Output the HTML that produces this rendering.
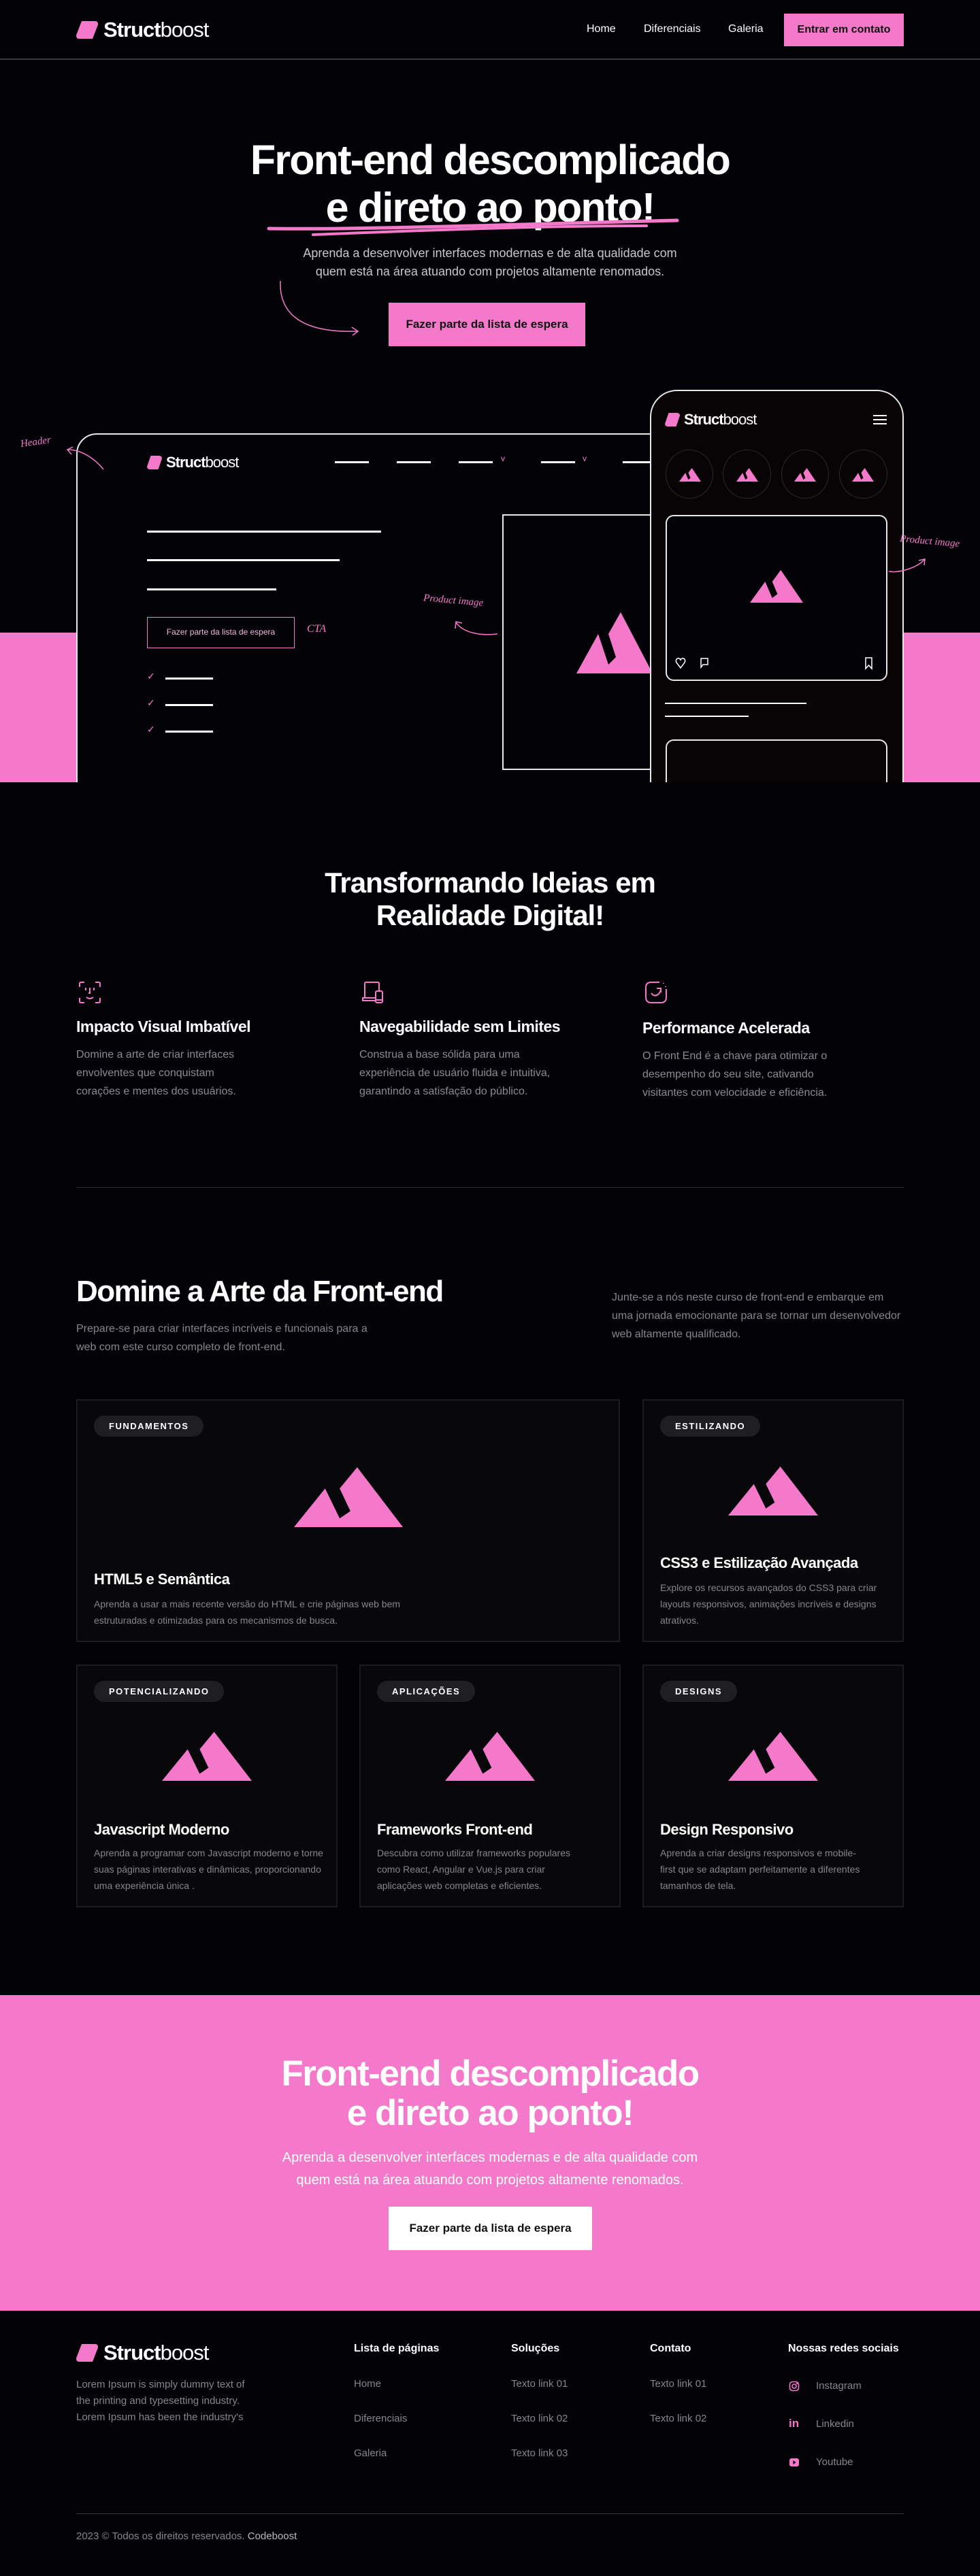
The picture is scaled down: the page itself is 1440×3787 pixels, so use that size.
<!DOCTYPE html>
<html><head><meta charset="utf-8"><style>
*{margin:0;padding:0;box-sizing:border-box}
body{width:1440px;height:3787px;background:#030307;color:#fff;font-family:"Liberation Sans",sans-serif;position:relative;overflow:hidden}
.a{position:absolute}
.pk{color:#f479ca}
.logo{display:flex;align-items:center;font-size:31px;letter-spacing:-1px;color:#fff}
.logo b{font-weight:700}.logo span{font-weight:400}
.logo i{display:inline-block;width:32px;height:26px;background:#f479ca;margin-right:8px;clip-path:polygon(25% 0,100% 0,100% 20%,75% 100%,0 100%,0 80%);border-radius:4px}
.ln{position:absolute;height:3px;background:#fff}
.card{position:absolute;background:#08080b;border:2px solid #1c1c20}
.pill{position:absolute;left:24px;top:22px;height:31px;padding:0 22px;border-radius:16px;background:#1f1f23;font-size:13px;letter-spacing:1.5px;line-height:31px;font-weight:700;color:#fff}
.ct{position:absolute;left:24px;font-size:22px;font-weight:700;letter-spacing:-.5px}
.cd{position:absolute;left:24px;font-size:14px;line-height:24px;color:#85858c}
.fh{position:absolute;font-size:16px;font-weight:700}
.fl{position:absolute;font-size:15px;color:#85858c}
.ft h3{font-size:23px;font-weight:700;letter-spacing:-.5px}
.ft p{font-size:16px;line-height:27px;color:#8a8a92;margin-top:14px;width:295px}
</style></head><body>
<svg width="0" height="0" style="position:absolute"><defs><g id="mt"><polygon fill="#f479ca" points="0,90 32,32 47,77 58,66 47,32 65,0 112,90"/></g></defs></svg>

<!-- NAV -->
<div class="a logo" style="left:112px;top:26px"><i></i><b>Struct</b><span>boost</span></div>
<div class="a" style="left:862px;top:34px;font-size:16px">Home</div>
<div class="a" style="left:946px;top:34px;font-size:16px">Diferenciais</div>
<div class="a" style="left:1070px;top:34px;font-size:16px">Galeria</div>
<div class="a" style="left:1152px;top:20px;width:176px;height:48px;background:#f479ca;color:#111;font-size:16px;font-weight:700;text-align:center;line-height:48px">Entrar em contato</div>
<div class="a" style="left:0;top:86px;width:1440px;height:2px;background:#3a3a3e"></div>

<!-- HERO -->
<div class="a" style="left:0;top:200px;width:1440px;text-align:center;font-size:61px;font-weight:700;letter-spacing:-1.8px;line-height:70px">Front-end descomplicado<br>e direto ao ponto!</div>
<svg class="a" style="left:390px;top:318px" width="610" height="40"><path d="M5 18 C150 20 350 12 605 6" stroke="#f479ca" stroke-width="5" fill="none" stroke-linecap="round"/><path d="M70 27 C250 20 400 14 560 14" stroke="#f479ca" stroke-width="4" fill="none" stroke-linecap="round"/></svg>
<div class="a" style="left:0;top:359px;width:1440px;text-align:center;font-size:18px;line-height:27px;color:#c8c8cc">Aprenda a desenvolver interfaces modernas e de alta qualidade com<br>quem está na área atuando com projetos altamente renomados.</div>
<svg class="a" style="left:405px;top:410px" width="130" height="85"><path d="M7 3 C5 45 30 80 120 77" stroke="#f479ca" stroke-width="1.5" fill="none"/><path d="M112 71 L121 77 L113 83" stroke="#f479ca" stroke-width="1.5" fill="none"/></svg>
<div class="a" style="left:571px;top:445px;width:289px;height:64px;background:#f479ca;color:#111;font-size:17px;font-weight:700;text-align:center;line-height:64px">Fazer parte da lista de espera</div>

<!-- pink bands -->
<div class="a" style="left:0;top:930px;width:1440px;height:220px;background:#f479ca"></div>

<!-- desktop mockup -->
<div class="a" style="left:112px;top:637px;width:900px;height:560px;border:2px solid #e8e8e8;border-radius:30px 0 0 0;background:#030307"></div>
<div class="a logo" style="left:216px;top:667px;font-size:22px"><i style="width:22px;height:20px;margin-right:6px"></i><b>Struct</b><span>boost</span></div>
<div class="ln" style="left:492px;top:678px;width:50px"></div>
<div class="ln" style="left:583px;top:678px;width:50px"></div>
<div class="ln" style="left:674px;top:678px;width:50px"></div><div class="a pk" style="left:736px;top:667px;font-size:12px">v</div>
<div class="ln" style="left:795px;top:678px;width:50px"></div><div class="a pk" style="left:856px;top:667px;font-size:12px">v</div>
<div class="ln" style="left:915px;top:678px;width:50px"></div>
<div class="ln" style="left:216px;top:780px;width:344px"></div>
<div class="ln" style="left:216px;top:822px;width:283px"></div>
<div class="ln" style="left:216px;top:865px;width:190px"></div>
<div class="a" style="left:216px;top:907px;width:217px;height:46px;border:1.5px solid #f479ca;font-size:12px;color:#f0b8dc;text-align:center;line-height:43px">Fazer parte da lista de espera</div>
<div class="a pk" style="left:451px;top:916px;font-size:16px;font-style:italic;font-family:'Liberation Serif',serif">CTA</div>
<div class="a pk" style="left:216px;top:986px;font-size:14px">✓</div><div class="ln" style="left:243px;top:996px;width:70px"></div>
<div class="a pk" style="left:216px;top:1025px;font-size:14px">✓</div><div class="ln" style="left:243px;top:1035px;width:70px"></div>
<div class="a pk" style="left:216px;top:1064px;font-size:14px">✓</div><div class="ln" style="left:243px;top:1074px;width:70px"></div>
<div class="a" style="left:738px;top:756px;width:260px;height:376px;border:2px solid #e8e8e8"></div>
<svg class="a" style="left:847px;top:900px" width="120" height="90"><use href="#mt"/></svg>
<div class="a pk" style="left:622px;top:875px;font-size:15px;font-style:italic;font-family:'Liberation Serif',serif;transform:rotate(5deg)">Product image</div>
<svg class="a" style="left:665px;top:910px" width="70" height="30"><path d="M5 5 C15 20 40 25 66 22" stroke="#f479ca" stroke-width="1.5" fill="none"/><path d="M4 14 L5 4 L14 6" stroke="#f479ca" stroke-width="1.5" fill="none"/></svg>
<div class="a pk" style="left:30px;top:642px;font-size:15px;font-style:italic;font-family:'Liberation Serif',serif;transform:rotate(-8deg)">Header</div>
<svg class="a" style="left:95px;top:655px" width="60" height="40"><path d="M5 6 C25 6 45 20 57 35" stroke="#f479ca" stroke-width="1.5" fill="none"/><path d="M12 2 L4 6 L10 13" stroke="#f479ca" stroke-width="1.5" fill="none"/></svg>

<!-- phone -->
<div class="a" style="left:955px;top:573px;width:373px;height:620px;border:2px solid #e8e8e8;border-radius:40px 40px 0 0;background:#080305"></div>
<div class="a logo" style="left:977px;top:604px;font-size:22px"><i style="width:22px;height:20px;margin-right:6px"></i><b>Struct</b><span>boost</span></div>
<div class="a" style="left:1283px;top:610px;width:20px;height:2px;background:#fff;box-shadow:0 6px 0 #fff,0 12px 0 #fff"></div>
<div class="a" style="left:978px;top:661px;width:70px;height:72px;border:1.5px solid #2a2a2e;border-radius:50%"></div>
<div class="a" style="left:1062px;top:661px;width:71px;height:72px;border:1.5px solid #2a2a2e;border-radius:50%"></div>
<div class="a" style="left:1148px;top:661px;width:70px;height:72px;border:1.5px solid #2a2a2e;border-radius:50%"></div>
<div class="a" style="left:1233px;top:661px;width:71px;height:72px;border:1.5px solid #2a2a2e;border-radius:50%"></div>
<svg class="a" style="left:998px;top:688px" width="32" height="20" viewBox="0 0 112 90" preserveAspectRatio="none"><use href="#mt"/></svg>
<svg class="a" style="left:1082px;top:688px" width="32" height="20" viewBox="0 0 112 90" preserveAspectRatio="none"><use href="#mt"/></svg>
<svg class="a" style="left:1167px;top:688px" width="32" height="20" viewBox="0 0 112 90" preserveAspectRatio="none"><use href="#mt"/></svg>
<svg class="a" style="left:1252px;top:688px" width="32" height="20" viewBox="0 0 112 90" preserveAspectRatio="none"><use href="#mt"/></svg>
<div class="a" style="left:978px;top:757px;width:326px;height:244px;border:2px solid #e8e8e8;border-radius:12px;background:#030307"></div>
<svg class="a" style="left:1102px;top:838px" width="78" height="48" viewBox="0 0 112 90" preserveAspectRatio="none"><use href="#mt"/></svg>
<svg class="a" style="left:992px;top:965px" width="60" height="20"><path d="M8 17 L2 9 C0 5 3 2 6 3 C7 3 8 5 8 6 C8 5 9 3 10 3 C13 2 16 5 14 9 Z" stroke="#fff" stroke-width="1.5" fill="none"/><path d="M38 3 H48 V12 H41 L38 16 Z" stroke="#fff" stroke-width="1.5" fill="none"/></svg>
<svg class="a" style="left:1270px;top:965px" width="14" height="20"><path d="M2 2 H11 V18 L6.5 13 L2 18 Z" stroke="#fff" stroke-width="1.5" fill="none"/></svg>
<div class="a" style="left:977px;top:1033px;width:208px;height:2px;background:#fff"></div>
<div class="a" style="left:977px;top:1052px;width:123px;height:2px;background:#fff"></div>
<div class="a" style="left:978px;top:1087px;width:326px;height:100px;border:2px solid #e8e8e8;border-radius:12px"></div>
<div class="a pk" style="left:1322px;top:788px;font-size:15px;font-style:italic;font-family:'Liberation Serif',serif;transform:rotate(5deg)">Product image</div>
<svg class="a" style="left:1304px;top:818px" width="60" height="30"><path d="M2 22 C20 25 45 15 54 5" stroke="#f479ca" stroke-width="1.5" fill="none"/><path d="M46 6 L55 4 L54 13" stroke="#f479ca" stroke-width="1.5" fill="none"/></svg>

<div class="a" style="left:0;top:1150px;width:1440px;height:60px;background:#030307"></div>

<!-- FEATURES -->
<div class="a" style="left:0;top:1274px;width:1440px;text-align:center;font-size:42px;font-weight:700;letter-spacing:-1px;line-height:48px">Transformando Ideias em<br>Realidade Digital!</div>
<svg class="a" style="left:115px;top:1442px" width="34" height="34" fill="none" stroke="#f479ca" stroke-width="2"><path d="M2 9 V4 Q2 2 4 2 H9 M25 2 H30 Q32 2 32 4 V9 M32 25 V30 Q32 32 30 32 H25 M9 32 H4 Q2 32 2 30 V25 M11 10 V14 M23 10 V14 M17 10 V18 H15 M12 24 Q17 28 22 24"/></svg>
<svg class="a" style="left:531px;top:1442px" width="34" height="34" fill="none" stroke="#f479ca" stroke-width="2"><path d="M5 25 V4 Q5 2 7 2 H24 Q26 2 26 4 V15 M2 25 H21 V29 H2 Z"/><rect x="21" y="15" width="10" height="17" rx="2"/><path d="M21 28 H31"/></svg>
<svg class="a" style="left:947px;top:1442px" width="34" height="34" fill="none" stroke="#f479ca" stroke-width="2"><path d="M22 2 H10 Q2 2 2 10 V24 Q2 32 10 32 H24 Q32 32 32 24 V12 M10 18 Q14 24 20 20 Q24 16 24 12 M18 11 H24 V17 M28 3 V4 M31 8 V9"/></svg>
<div class="a ft" style="left:112px;top:1496px;width:330px"><h3>Impacto Visual Imbatível</h3><p style="width:270px">Domine a arte de criar interfaces envolventes que conquistam corações e mentes dos usuários.</p></div>
<div class="a ft" style="left:528px;top:1496px;width:330px"><h3>Navegabilidade sem Limites</h3><p style="width:320px">Construa a base sólida para uma experiência de usuário fluida e intuitiva, garantindo a satisfação do público.</p></div>
<div class="a ft" style="left:944px;top:1498px;width:330px"><h3>Performance Acelerada</h3><p style="width:315px">O Front End é a chave para otimizar o desempenho do seu site, cativando visitantes com velocidade e eficiência.</p></div>
<div class="a" style="left:112px;top:1745px;width:1216px;height:1px;background:#2c2c31"></div>

<!-- COURSE -->
<div class="a" style="left:112px;top:1874px;font-size:44px;font-weight:700;letter-spacing:-1.5px">Domine a Arte da Front-end</div>
<div class="a" style="left:112px;top:1940px;font-size:16px;line-height:27px;color:#85858c;width:430px">Prepare-se para criar interfaces incríveis e funcionais para a web com este curso completo de front-end.</div>
<div class="a" style="left:899px;top:1894px;font-size:16px;line-height:27px;color:#85858c;width:428px">Junte-se a nós neste curso de front-end e embarque em uma jornada emocionante para se tornar um desenvolvedor web altamente qualificado.</div>

<div class="card" style="left:112px;top:2057px;width:799px;height:357px"><div class="pill">FUNDAMENTOS</div>
<svg class="a" style="left:318px;top:98px" width="160" height="88" viewBox="0 0 112 90" preserveAspectRatio="none"><use href="#mt"/></svg>
<div class="ct" style="top:250px">HTML5 e Semântica</div>
<div class="cd" style="top:287px;width:490px">Aprenda a usar a mais recente versão do HTML e crie páginas web bem estruturadas e otimizadas para os mecanismos de busca.</div></div>

<div class="card" style="left:944px;top:2057px;width:384px;height:357px"><div class="pill">ESTILIZANDO</div>
<svg class="a" style="left:124px;top:97px" width="132" height="72" viewBox="0 0 112 90" preserveAspectRatio="none"><use href="#mt"/></svg>
<div class="ct" style="top:226px">CSS3 e Estilização Avançada</div>
<div class="cd" style="top:263px;width:330px">Explore os recursos avançados do CSS3 para criar layouts responsivos, animações incríveis e designs atrativos.</div></div>

<div class="card" style="left:112px;top:2447px;width:384px;height:357px"><div class="pill">POTENCIALIZANDO</div>
<svg class="a" style="left:124px;top:97px" width="132" height="72" viewBox="0 0 112 90" preserveAspectRatio="none"><use href="#mt"/></svg>
<div class="ct" style="top:228px">Javascript Moderno</div>
<div class="cd" style="top:263px;width:340px">Aprenda a programar com Javascript moderno e torne suas páginas interativas e dinâmicas, proporcionando uma experiência única .</div></div>

<div class="card" style="left:528px;top:2447px;width:384px;height:357px"><div class="pill">APLICAÇÕES</div>
<svg class="a" style="left:124px;top:97px" width="132" height="72" viewBox="0 0 112 90" preserveAspectRatio="none"><use href="#mt"/></svg>
<div class="ct" style="top:228px">Frameworks Front-end</div>
<div class="cd" style="top:263px;width:300px">Descubra como utilizar frameworks populares como React, Angular e Vue.js para criar aplicações web completas e eficientes.</div></div>

<div class="card" style="left:944px;top:2447px;width:384px;height:357px"><div class="pill">DESIGNS</div>
<svg class="a" style="left:124px;top:97px" width="132" height="72" viewBox="0 0 112 90" preserveAspectRatio="none"><use href="#mt"/></svg>
<div class="ct" style="top:228px">Design Responsivo</div>
<div class="cd" style="top:263px;width:310px">Aprenda a criar designs responsivos e mobile-first que se adaptam perfeitamente a diferentes tamanhos de tela.</div></div>

<!-- CTA -->
<div class="a" style="left:0;top:2933px;width:1440px;height:464px;background:#f479ca"></div>
<div class="a" style="left:0;top:3020px;width:1440px;text-align:center;font-size:53px;font-weight:700;letter-spacing:-1.5px;line-height:58px;color:#fff">Front-end descomplicado<br>e direto ao ponto!</div>
<div class="a" style="left:0;top:3156px;width:1440px;text-align:center;font-size:20px;line-height:33px;color:#fff">Aprenda a desenvolver interfaces modernas e de alta qualidade com<br>quem está na área atuando com projetos altamente renomados.</div>
<div class="a" style="left:571px;top:3244px;width:299px;height:64px;background:#fff;color:#111;font-size:17px;font-weight:700;text-align:center;line-height:64px">Fazer parte da lista de espera</div>

<!-- FOOTER -->
<div class="a logo" style="left:112px;top:3441px"><i></i><b>Struct</b><span>boost</span></div>
<div class="a" style="left:112px;top:3494px;width:270px;font-size:15px;line-height:24px;color:#85858c">Lorem Ipsum is simply dummy text of the printing and typesetting industry. Lorem Ipsum has been the industry's</div>
<div class="fh" style="left:520px;top:3444px">Lista de páginas</div>
<div class="fh" style="left:751px;top:3444px">Soluções</div>
<div class="fh" style="left:955px;top:3444px">Contato</div>
<div class="fh" style="left:1158px;top:3444px">Nossas redes sociais</div>
<div class="fl" style="left:520px;top:3496px">Home</div>
<div class="fl" style="left:520px;top:3547px">Diferenciais</div>
<div class="fl" style="left:520px;top:3598px">Galeria</div>
<div class="fl" style="left:751px;top:3496px">Texto link 01</div>
<div class="fl" style="left:751px;top:3547px">Texto link 02</div>
<div class="fl" style="left:751px;top:3598px">Texto link 03</div>
<div class="fl" style="left:955px;top:3496px">Texto link 01</div>
<div class="fl" style="left:955px;top:3547px">Texto link 02</div>
<svg class="a" style="left:1159px;top:3500px" width="16" height="16" fill="none" stroke="#f479ca" stroke-width="1.6"><rect x="1.5" y="1.5" width="13" height="13" rx="4"/><circle cx="8" cy="8" r="3"/><circle cx="12" cy="4" r=".5"/></svg>
<div class="fl" style="left:1199px;top:3499px">Instagram</div>
<div class="a pk" style="left:1159px;top:3553px;font-size:17px;font-weight:700">in</div>
<div class="fl" style="left:1199px;top:3555px">Linkedin</div>
<svg class="a" style="left:1159px;top:3612px" width="16" height="16"><rect x="1" y="2" width="14" height="12" rx="3" fill="#f479ca"/><path d="M6.5 5 L10.5 8 L6.5 11 Z" fill="#030307"/></svg>
<div class="fl" style="left:1199px;top:3611px">Youtube</div>
<div class="a" style="left:112px;top:3695px;width:1216px;height:1px;background:#3a3a3e"></div>
<div class="a" style="left:112px;top:3720px;font-size:15px;color:#85858c">2023 © Todos os direitos reservados. <span style="color:#b8b8bd">Codeboost</span></div>
</body></html>
